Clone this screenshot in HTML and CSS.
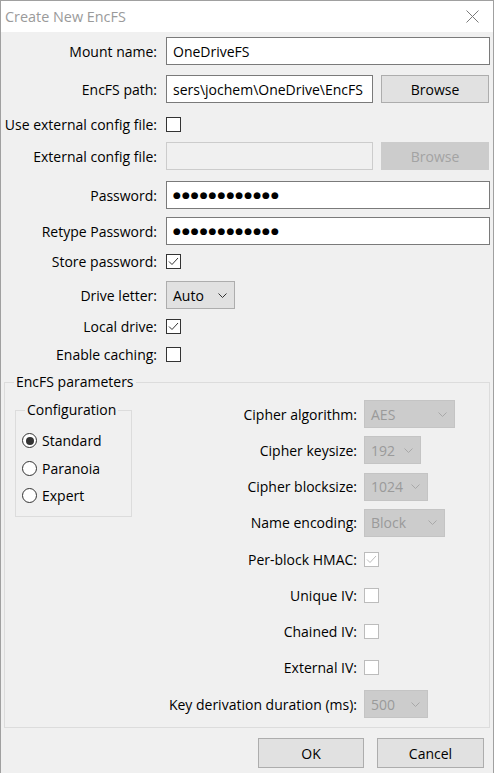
FILE: index.html
```html
<!DOCTYPE html>
<html lang="en">
<head>
<meta charset="utf-8">
<title>Create New EncFS</title>
<link rel="stylesheet" href="styles.css">
</head>
<body>
<div class="window">
  <div class="titlebar">
    <span class="title">Create New EncFS</span>
    <svg class="close" viewBox="0 0 13 13" width="13" height="13"><path d="M0.5 0.5 L12.5 12.5 M12.5 0.5 L0.5 12.5" stroke="#7a7a7a" stroke-width="1" fill="none"/></svg>
  </div>
  <div class="form">
    <div class="row">
      <div class="label">Mount name:</div>
      <div class="field wide">OneDriveFS</div>
    </div>
    <div class="row mt10">
      <div class="label">EncFS path:</div>
      <div class="field mid">sers\jochem\OneDrive\EncFS</div>
      <div class="btn">Browse</div>
    </div>
    <div class="row mt7">
      <div class="label">Use external config file:</div>
      <div class="check"></div>
    </div>
    <div class="row mt4">
      <div class="label">External config file:</div>
      <div class="field mid disabled"></div>
      <div class="btn disabled">Browse</div>
    </div>
    <div class="row mt11">
      <div class="label">Password:</div>
      <div class="field wide dots">●●●●●●●●●●●●</div>
    </div>
    <div class="row mt8">
      <div class="label">Retype Password:</div>
      <div class="field wide dots">●●●●●●●●●●●●</div>
    </div>
    <div class="row mt2">
      <div class="label">Store password:</div>
      <div class="check"><svg viewBox="0 0 13 13" width="13" height="13"><path d="M2 6.5 L5 9.5 L11 3" stroke="#333" stroke-width="1" fill="none"/></svg></div>
    </div>
    <div class="row mt6">
      <div class="label">Drive letter:</div>
      <div class="combo w69"><span>Auto</span><svg class="chev" viewBox="0 0 9 5" width="9" height="5"><path d="M0.5 0.5 L4.5 4.5 L8.5 0.5" stroke="#333" fill="none"/></svg></div>
    </div>
    <div class="row mt3">
      <div class="label">Local drive:</div>
      <div class="check"><svg viewBox="0 0 13 13" width="13" height="13"><path d="M2 6.5 L5 9.5 L11 3" stroke="#333" stroke-width="1" fill="none"/></svg></div>
    </div>
    <div class="row">
      <div class="label">Enable caching:</div>
      <div class="check"></div>
    </div>
  </div>

  <fieldset class="params">
    <legend>EncFS parameters</legend>
    <div class="params-inner">
      <fieldset class="config">
        <legend>Configuration</legend>
        <div class="radio-row"><span class="radio on"><span class="dot"></span></span>Standard</div>
        <div class="radio-row"><span class="radio"></span>Paranoia</div>
        <div class="radio-row"><span class="radio"></span>Expert</div>
      </fieldset>
      <div class="cipher">
        <div class="clabel">Cipher algorithm:</div>
        <div class="combo disabled w91"><span>AES</span><svg class="chev" viewBox="0 0 9 5" width="9" height="5"><path d="M0.5 0.5 L4.5 4.5 L8.5 0.5" stroke="#a8a8a8" fill="none"/></svg></div>
        <div class="clabel">Cipher keysize:</div>
        <div class="combo disabled w57"><span>192</span><svg class="chev" viewBox="0 0 9 5" width="9" height="5"><path d="M0.5 0.5 L4.5 4.5 L8.5 0.5" stroke="#a8a8a8" fill="none"/></svg></div>
        <div class="clabel">Cipher blocksize:</div>
        <div class="combo disabled w64"><span>1024</span><svg class="chev" viewBox="0 0 9 5" width="9" height="5"><path d="M0.5 0.5 L4.5 4.5 L8.5 0.5" stroke="#a8a8a8" fill="none"/></svg></div>
        <div class="clabel">Name encoding:</div>
        <div class="combo disabled w81"><span>Block</span><svg class="chev" viewBox="0 0 9 5" width="9" height="5"><path d="M0.5 0.5 L4.5 4.5 L8.5 0.5" stroke="#a8a8a8" fill="none"/></svg></div>
        <div class="clabel">Per-block HMAC:</div>
        <div class="check inner dis"><svg viewBox="0 0 13 13" width="13" height="13"><path d="M2 6.5 L5 9.5 L11 3" stroke="#bcbcbc" stroke-width="1" fill="none"/></svg></div>
        <div class="clabel">Unique IV:</div>
        <div class="check inner dis"></div>
        <div class="clabel">Chained IV:</div>
        <div class="check inner dis"></div>
        <div class="clabel">External IV:</div>
        <div class="check inner dis"></div>
        <div class="clabel">Key derivation duration (ms):</div>
        <div class="combo disabled w64"><span>500</span><svg class="chev" viewBox="0 0 9 5" width="9" height="5"><path d="M0.5 0.5 L4.5 4.5 L8.5 0.5" stroke="#a8a8a8" fill="none"/></svg></div>
      </div>
    </div>
  </fieldset>

  <div class="actions">
    <div class="btn ok">OK</div>
    <div class="btn cancel">Cancel</div>
  </div>
</div>
</body>
</html>
```
FILE: styles.css
```css
* { box-sizing: border-box; }
html, body { margin: 0; padding: 0; }
body {
  background: #f0f0f0;
  font-family: "Open Sans", "Noto Sans", sans-serif;
  font-size: 14px;
  color: #000;
  width: 494px;
  height: 773px;
  overflow: hidden;
}
.window {
  width: 494px;
  height: 773px;
  border: 1px solid #a0a0a0;
  border-bottom: none;
  background: #f0f0f0;
}
.titlebar {
  height: 31px;
  background: #fff;
  display: flex;
  align-items: center;
  justify-content: space-between;
  padding: 0 14px 0 4px;
}
.title { color: #9a9a9a; font-size: 14.4px; }
.close { display: block; }

.form { padding-top: 5px; }
.row { display: flex; align-items: center; height: 28px; }
.mt2 { margin-top: 2px; }
.mt3 { margin-top: 3px; }
.mt4 { margin-top: 4px; }
.mt6 { margin-top: 6px; }
.mt7 { margin-top: 7px; }
.mt8 { margin-top: 8px; }
.mt10 { margin-top: 10px; }
.mt11 { margin-top: 11px; }
.label {
  width: 156px;
  flex: none;
  display: flex;
  justify-content: flex-end;
  white-space: nowrap;
  margin-right: 9px;
}
.field {
  height: 28px;
  border: 1px solid #7a7a7a;
  background: #fff;
  padding: 0 6px;
  display: flex;
  align-items: center;
  overflow: hidden;
  white-space: nowrap;
}
.field.wide { width: 324px; }
.field.mid { width: 207px; }
.field.disabled { background: #f0f0f0; border-color: #cccccc; }
.field.dots {
  font-family: "DejaVu Sans", sans-serif;
  font-size: 9px;
  letter-spacing: 1.05px;
}
.btn {
  height: 28px;
  width: 108px;
  margin-left: 8px;
  background: #e1e1e1;
  border: 1px solid #adadad;
  display: flex;
  align-items: center;
  justify-content: center;
}
.btn.disabled { background: #cccccc; border-color: #cccccc; color: #a3a3a3; }

.check {
  width: 15px;
  height: 15px;
  border: 1px solid #333;
  background: #fff;
  display: flex;
  align-items: center;
  justify-content: center;
}
.check svg { display: block; }
.check.dis { border-color: #bcbcbc; }

.combo {
  height: 28px;
  border: 1px solid #adadad;
  background: #e1e1e1;
  display: flex;
  align-items: center;
  justify-content: space-between;
  padding: 0 7px 0 6px;
}
.combo.disabled { background: #cccccc; border-color: #c4c4c4; color: #9a9a9a; }
.chev { display: block; }
.w69 { width: 69px; }
.w91 { width: 91px; }
.w57 { width: 57px; }
.w64 { width: 64px; }
.w81 { width: 81px; }

.params {
  margin: 4px 0 0 3px;
  width: 486px;
  min-width: 0;
  border: 1px solid #dcdcdc;
  padding: 0 9px 5px 9px;
}
.params legend, .config legend {
  padding: 0 2px;
  line-height: 20px;
}
.params-inner { display: flex; align-items: flex-start; }
.config {
  margin: 8px 0 0 1px;
  width: 117px;
  min-width: 0;
  flex: none;
  border: 1px solid #dcdcdc;
  padding: 7px 0 6px 6px;
}
.config legend { margin-left: 3px; }
.radio-row {
  height: 27.5px;
  display: flex;
  align-items: center;
  gap: 5px;
}
.radio {
  width: 15px;
  height: 15px;
  border: 1px solid #333;
  border-radius: 50%;
  background: #fff;
  display: flex;
  align-items: center;
  justify-content: center;
}
.radio .dot {
  width: 8px;
  height: 8px;
  border-radius: 50%;
  background: #333;
}
.cipher {
  flex: 1;
  margin-top: 4px;
  display: grid;
  grid-template-columns: 1fr 116px;
  column-gap: 7px;
  grid-auto-rows: 36.25px;
  align-items: center;
}
.clabel { justify-self: end; white-space: nowrap; }
.cipher .combo, .cipher .check { justify-self: start; }

.actions {
  display: flex;
  justify-content: flex-end;
  gap: 13px;
  padding-right: 9px;
  margin-top: 10px;
}
.actions .btn { height: 30px; margin-left: 0; }
.btn.ok { width: 106px; }
.btn.cancel { width: 107px; }
```
